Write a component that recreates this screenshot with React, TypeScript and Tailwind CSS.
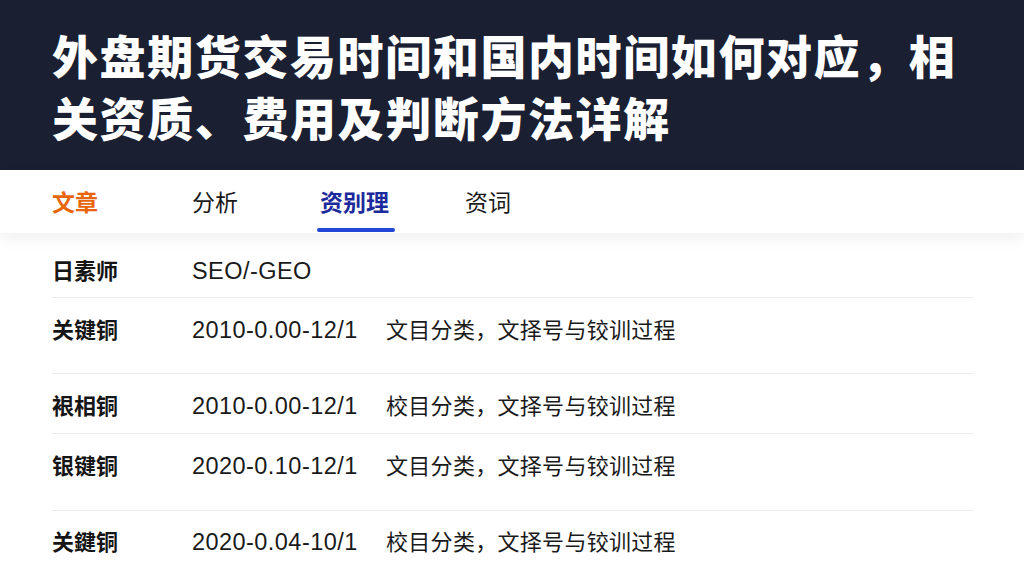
import React from 'react';

const cjk = { fontFamily: '"Noto Sans CJK SC", "Noto Sans", sans-serif' };
const latin = { fontFamily: '"Liberation Sans", "Noto Sans CJK SC", sans-serif' };

const tabs = [
  { label: '文章', w: 'w-[140px]', cls: 'text-[#e8650c] font-bold' },
  { label: '分析', w: 'w-[128px]', cls: 'text-[#1a1a1a]' },
  { label: '资别理', w: 'w-[145px]', cls: 'text-[#1c2a9c] font-bold', active: true },
  { label: '资词', w: 'w-[100px]', cls: 'text-[#1a1a1a]' },
];

// heights follow the uneven row spacing of the screenshot
const rows = [
  { label: '日素师', num: 'SEO/-GEO', text: '', box: 'h-[65px] pt-[10px]' },
  { label: '关键铜', num: '2010-0.00-12/1', text: '文目分类，文择号与铰训过程', box: 'h-[76px] pb-[13px]' },
  { label: '裉相铜', num: '2010-0.00-12/1', text: '校目分类，文择号与铰训过程', box: 'h-[60px] pt-[3px]' },
  { label: '银键铜', num: '2020-0.10-12/1', text: '文目分类，文择号与铰训过程', box: 'h-[77px] pb-[14px]' },
  { label: '关鍵铜', num: '2020-0.04-10/1', text: '校目分类，文择号与铰训过程', box: 'h-[60px]' },
];

export default function App() {
  return (
    <div className="w-[1024px] h-[576px] overflow-hidden bg-white" style={cjk}>
      <div className="bg-[#1a1f31] h-[170px] px-[52px] py-[23px]">
        <h1 className="text-white font-black text-[46px] leading-[62px] tracking-[1.6px]">
          外盘期货交易时间和国内时间如何对应，相关资质、费用及判断方法详解
        </h1>
      </div>

      <div className="relative z-10 h-[63px] bg-white flex items-center px-[52px] shadow-[0_6px_14px_rgba(0,0,0,0.06)]">
        {tabs.map((t) => (
          <div key={t.label} className={`${t.w} shrink-0 h-full flex items-center`}>
            <div className={`relative text-[23px] leading-none ${t.cls}`}>
              {t.label}
              {t.active && (
                <div className="absolute -left-[3px] -right-[6px] top-[38px] h-[4px] rounded-full bg-[#2346d8]" />
              )}
            </div>
          </div>
        ))}
      </div>

      <div className="pl-[52px] pr-[51px]">
        {rows.map((r, i) => (
          <div
            key={i}
            className={`flex items-center ${r.box} ${i < rows.length - 1 ? 'border-b border-[#ebebef]' : ''}`}
          >
            <div className="flex items-baseline leading-[30px]">
              <span className="w-[140px] shrink-0 text-[22px] font-bold text-[#151515]">{r.label}</span>
              <span className="w-[194px] shrink-0 text-[23.5px] tracking-[0.45px] text-[#1a1a1a]" style={latin}>
                {r.num}
              </span>
              {r.text && <span className="text-[22px] tracking-[0.3px] text-[#1a1a1a]">{r.text}</span>}
            </div>
          </div>
        ))}
      </div>
    </div>
  );
}
